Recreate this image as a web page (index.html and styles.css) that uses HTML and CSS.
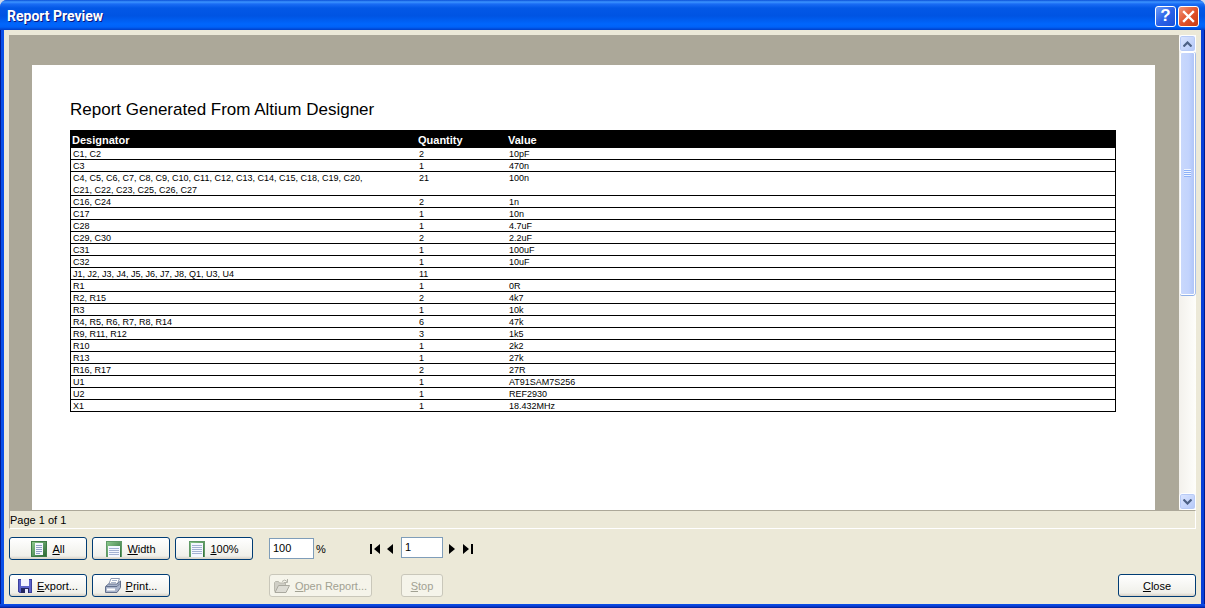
FILE: index.html
```
<!DOCTYPE html>
<html lang="en">
<head>
<meta charset="utf-8">
<title>Report Preview</title>
<link rel="stylesheet" href="styles.css">
</head>
<body>
<div class="window">
  <header class="titlebar">
    <h1 class="caption">Report Preview</h1>
    <button class="cap-btn help" type="button" aria-label="Help">?</button>
    <button class="cap-btn quit" type="button" aria-label="Close window"><svg width="19" height="19" viewBox="0 0 19 19"><path d="M5 5l9 9M14 5l-9 9" stroke="#fff" stroke-width="2.400" stroke-linecap="square"/></svg></button>
  </header>

  <main class="client">
    <section class="viewer">
      <div class="canvas">
        <article class="sheet">
          <h2 class="report-title">Report Generated From Altium Designer</h2>
          <table class="report">
            <colgroup><col class="col-des"><col class="col-qty"><col></colgroup>
            <thead><tr><th>Designator</th><th>Quantity</th><th>Value</th></tr></thead>
            <tbody>
              <tr><td>C1, C2</td><td>2</td><td>10pF</td></tr>
              <tr><td>C3</td><td>1</td><td>470n</td></tr>
              <tr><td>C4, C5, C6, C7, C8, C9, C10, C11, C12, C13, C14, C15, C18, C19, C20, C21, C22, C23, C25, C26, C27</td><td>21</td><td>100n</td></tr>
              <tr><td>C16, C24</td><td>2</td><td>1n</td></tr>
              <tr><td>C17</td><td>1</td><td>10n</td></tr>
              <tr><td>C28</td><td>1</td><td>4.7uF</td></tr>
              <tr><td>C29, C30</td><td>2</td><td>2.2uF</td></tr>
              <tr><td>C31</td><td>1</td><td>100uF</td></tr>
              <tr><td>C32</td><td>1</td><td>10uF</td></tr>
              <tr><td>J1, J2, J3, J4, J5, J6, J7, J8, Q1, U3, U4</td><td>11</td><td></td></tr>
              <tr><td>R1</td><td>1</td><td>0R</td></tr>
              <tr><td>R2, R15</td><td>2</td><td>4k7</td></tr>
              <tr><td>R3</td><td>1</td><td>10k</td></tr>
              <tr><td>R4, R5, R6, R7, R8, R14</td><td>6</td><td>47k</td></tr>
              <tr><td>R9, R11, R12</td><td>3</td><td>1k5</td></tr>
              <tr><td>R10</td><td>1</td><td>2k2</td></tr>
              <tr><td>R13</td><td>1</td><td>27k</td></tr>
              <tr><td>R16, R17</td><td>2</td><td>27R</td></tr>
              <tr><td>U1</td><td>1</td><td>AT91SAM7S256</td></tr>
              <tr><td>U2</td><td>1</td><td>REF2930</td></tr>
              <tr><td>X1</td><td>1</td><td>18.432MHz</td></tr>
            </tbody>
          </table>
        </article>
      </div>
      <div class="scrollbar">
        <button class="arrow" type="button" aria-label="Scroll up"><svg width="9" height="6" viewBox="0 0 9 6"><path d="M.5 5.500l4-4 4 4" fill="none" stroke="#4d6185" stroke-width="2.200"/></svg></button>
        <div class="track"><div class="thumb"><span class="grip"></span></div></div>
        <button class="arrow" type="button" aria-label="Scroll down"><svg width="9" height="6" viewBox="0 0 9 6"><path d="M.5.5l4 4 4-4" fill="none" stroke="#4d6185" stroke-width="2.200"/></svg></button>
      </div>
    </section>

    <p class="status">Page 1 of 1</p>

    <form class="controls">
      <div class="group">
        <button class="btn" type="button"><svg class="icon" width="16" height="16" viewBox="0 0 16 16"><defs><linearGradient id="g" x2="1" y2="1"><stop offset="0" stop-color="#8cc88e"/><stop offset="1" stop-color="#2c6a34"/></linearGradient></defs><path d="M0 0h16v16H0z" fill="#3f7d46"/><path d="M1 1h14v14H1z" fill="url(#g)"/><path d="M4 2h8v12H4z" fill="#f4f7ff"/><path d="M5 4.500h6M5 6.500h6M5 8.500h6M5 10.500h6M5 12.500h4" stroke="#8fa0c6"/></svg><span><u>A</u>ll</span></button>
        <button class="btn" type="button"><svg class="icon" width="16" height="16" viewBox="0 0 16 16"><path d="M0 0h16v16H0z" fill="#5f9a66"/><path d="M1 1h14v15H1z" fill="url(#g)"/><path d="M2 5h12v11H2z" fill="#f4f7ff"/><path d="M3 7.500h10M3 9.500h10M3 11.500h10M3 13.500h10" stroke="#a3b1d2"/></svg><span><u>W</u>idth</span></button>
        <button class="btn" type="button"><svg class="icon" width="16" height="16" viewBox="0 0 16 16"><path d="M0 0h16v16H0z" fill="#5f9a66"/><path d="M1 1h14v15H1z" fill="url(#g)"/><path d="M2 2h12v14H2z" fill="#f4f7ff"/><path d="M3 4.500h10M3 6.500h10M3 8.500h10M3 10.500h10M3 12.500h10" stroke="#a3b1d2"/></svg><span><u>1</u>00%</span></button>
      </div>
      <div class="zoom">
        <input class="field zoom-field" id="zoom" type="text" value="100"><label for="zoom">%</label>
        <span class="pager back">
          <button class="nav" type="button" aria-label="First page"><svg width="11" height="10" viewBox="0 0 11 10"><path d="M0 0h2v10H0zM10 0v10L4 5z"/></svg></button>
          <button class="nav" type="button" aria-label="Previous page"><svg width="6" height="10" viewBox="0 0 6 10"><path d="M6 0v10L0 5z"/></svg></button>
        </span>
      </div>
      <input class="field page-field" type="text" value="1" aria-label="Page number">
      <span class="pager">
        <button class="nav" type="button" aria-label="Next page"><svg width="6" height="10" viewBox="0 0 6 10"><path d="M0 0v10l6-5z"/></svg></button>
        <button class="nav" type="button" aria-label="Last page"><svg width="11" height="10" viewBox="0 0 11 10"><path d="M1 0v10l6-5zM9 0h2v10H9z"/></svg></button>
      </span>

      <div class="group">
        <button class="btn" type="button"><svg class="icon" width="14" height="14" viewBox="0 0 14 14"><path d="M0 0h14v14H1.500L0 12.500z" fill="#3b3f9c"/><path d="M1 1h12v12H2l-1-1z" fill="#5b62c9"/><path d="M3 0h8v7H3z" fill="#f3f4ff"/><path d="M3 9h8v5H3z" fill="#23265f"/><path d="M7 10h3v4H7z" fill="#e8eaff"/></svg><span><u>E</u>xport...</span></button>
        <button class="btn" type="button"><svg class="icon" width="16" height="15" viewBox="0 0 16 15"><path d="M6 .5h8.500L12 7H3.500z" fill="#fff" stroke="#8d9ab3"/><path d="M7 2.500h5M6 4.500h5" stroke="#a9b5ca"/><path d="M.5 8.500L3.500 6H12l3.500-3v6.500l-3.500 5H.5z" fill="#aab5cc" stroke="#62708c"/><path d="M1 8.500h11l3-3" fill="none" stroke="#62708c"/><path d="M2 11.500h8" stroke="#fff" stroke-width="2"/></svg><span><u>P</u>rint...</span></button>
      </div>
      <div><button class="btn open" type="button" disabled><svg class="icon" width="16" height="14" viewBox="0 0 16 14"><path d="M.5 12.500v-9l1-1h3l1 1.500h6v3" fill="#d0cfc6" stroke="#b9b8ad"/><path d="M1 13.500l3.500-7h11l-3.500 7z" fill="#dddcd4" stroke="#aaa99f"/><path d="M8 2.500q3-3 5 0M13.500 0v3.500H10" fill="none" stroke="#b3b2a8"/></svg><span><u>O</u>pen Report...</span></button></div>
      <button class="btn stop" type="button" disabled><span><u>S</u>top</span></button>
      <button class="btn close" type="button"><span><u>C</u>lose</span></button>
    </form>
  </main>
</div>
</body>
</html>
```
FILE: styles.css
```
* { box-sizing: border-box; }

body {
  margin: 0;
  background: #cfd8ea;
  color: #000;
  font: 11px/14px "Liberation Sans", Arial, sans-serif;
}

button, input { font: inherit; color: inherit; }
h1, h2, p { margin: 0; }

.window {
  display: flex;
  flex-direction: column;
  height: 100vh;
  overflow: hidden;
  border-radius: 7px 7px 0 0;
  background: #0a50e4;
}

.titlebar {
  display: flex;
  align-items: center;
  gap: 2px;
  height: 30px;
  flex: none;
  padding: 2px 6px 0 7px;
  background: linear-gradient(#0a4fd8 0, #3c94ff 2px, #1a6cf4 4px, #0358e6 8px, #0054e3 16px, #0066fc 24px, #0062f8 27px, #003fc8 30px);
}

.caption {
  flex: 1;
  color: #fff;
  font: bold 14px/18px Roboto, sans-serif;
  text-shadow: 1px 1px 0 #0a1883;
}

.cap-btn {
  display: flex;
  align-items: center;
  justify-content: center;
  width: 21px;
  height: 21px;
  padding: 0;
  border: 1px solid #fff;
  border-radius: 3px;
  color: #fff;
}
.help {
  background: linear-gradient(135deg, #6d9cf8, #2a62e8 50%, #1b50d8);
  font-size: 17px;
  font-weight: bold;
}
.quit { background: linear-gradient(135deg, #f0957a, #e2532c 50%, #c83c12); }

.client {
  display: flex;
  flex-direction: column;
  flex: 1;
  min-height: 0;
  margin: 0 4px;
  padding: 5px 5px 7px;
  background: #ece9d8;
  box-shadow: -3px 0 0 #0a50e8, 3px 0 0 #0a3fd8, -4px 0 0 #001a90, 4px 0 0 #001a90;
}
.window::after {
  content: "";
  flex: none;
  height: 4px;
  background: linear-gradient(#0a50e8 0, #0a40d8 50%, #001a90 100%);
}

.viewer {
  display: flex;
  flex: 1;
  min-height: 0;
}

.canvas {
  flex: 1;
  overflow: hidden;
  padding: 30px 24px 0 23px;
  background: #aca899;
}

.sheet {
  min-height: 100%;
  padding: 35px 39px 0 38px;
  background: #fff;
}

.report-title {
  margin-bottom: 10px;
  font-size: 17px;
  font-weight: 400;
  line-height: 20px;
}

.report {
  width: 100%;
  table-layout: fixed;
  border-collapse: separate;
  border-spacing: 0;
  border: 1px solid #000;
  border-bottom: 0;
  font-size: 9px;
  line-height: 12px;
}
.col-des { width: 346px; }
.col-qty { width: 90px; }
.report th {
  padding: 3px 1px 1px;
  background: #000;
  color: #fff;
  font-size: 11px;
  line-height: 13px;
  text-align: left;
}
.report td {
  height: 12px;
  padding: 0 2px;
  box-shadow: inset 0 -1px 0 #000;
  vertical-align: top;
}
.report td:first-child { padding-right: 36px; }

.scrollbar {
  display: flex;
  flex-direction: column;
  width: 17px;
  background: linear-gradient(90deg, #f3f1ec, #fefefb);
}
.arrow {
  display: flex;
  align-items: center;
  justify-content: center;
  height: 17px;
  padding: 0;
  border: 1px solid #fff;
  border-radius: 3px;
  background: linear-gradient(135deg, #dce6ff, #b4c8f8);
  box-shadow: inset 0 0 0 1px #b8cbf6;
}
.track { flex: 1; }
.thumb {
  display: flex;
  align-items: center;
  justify-content: center;
  height: 55%;
  margin: 0 1px;
  border: 1px solid #fff;
  border-radius: 2px;
  background: linear-gradient(90deg, #c9d8fc, #c2d3fd 60%, #b0c5f8);
  box-shadow: 0 1px 0 #8fb0e8, 1px 0 0 #a9c0ea;
}
.grip {
  width: 7px;
  height: 8px;
  background: repeating-linear-gradient(#eef4fe 0 1px, #8cb0f8 1px 2px);
}

.status {
  height: 19px;
  padding: 2px 0;
  border: 1px solid #fff;
  border-top-color: #aca899;
  border-left-color: #aca899;
}

.controls {
  display: grid;
  grid-template-columns: 260px 132px 42px 1fr;
  gap: 14px 0;
  align-items: start;
  padding-top: 8px;
}
.group, .zoom, .pager { display: flex; }
.group { gap: 5px; }
.zoom { align-items: center; gap: 2px; }

.btn {
  display: flex;
  align-items: center;
  justify-content: center;
  gap: 5px;
  width: 78px;
  height: 23px;
  padding: 0;
  border: 1px solid #003c74;
  border-radius: 3px;
  background: linear-gradient(#fff, #f0f0ea 85%, #d6d0c5);
  white-space: nowrap;
}
.btn:disabled {
  border-color: #c9c7ba;
  background: #f5f4ea;
  color: #a1a192;
}
.btn.open { width: 103px; }
.btn.stop { width: 42px; }
.btn.close { justify-self: end; }

.field {
  height: 21px;
  padding: 0 3px 2px;
  border: 1px solid #7f9db9;
  background: #fff;
}
.zoom-field { width: 45px; }
.page-field { width: 42px; }

.pager { align-items: center; gap: 7px; height: 23px; padding-left: 6px; }
.pager.back { margin-left: auto; padding: 0 8px 0 0; gap: 6px; }
.nav { display: flex; padding: 0; border: 0; background: none; }
```
